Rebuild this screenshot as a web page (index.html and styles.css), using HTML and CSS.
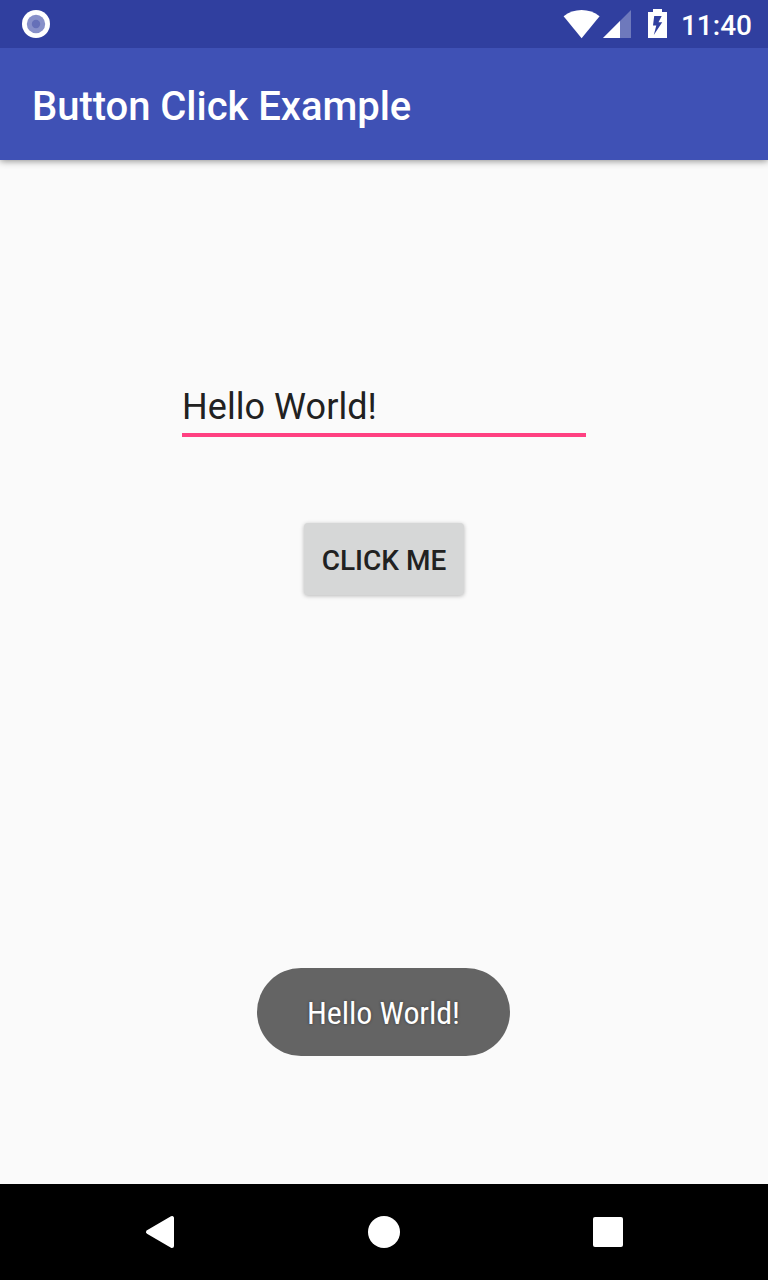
FILE: index.html
```html
<!DOCTYPE html>
<html lang="en">
<head>
<meta charset="utf-8">
<title>Button Click Example</title>
<link rel="stylesheet" href="styles.css">
</head>
<body>
<div class="screen">
  <header class="status-bar">
    <svg class="notification" width="28" height="28" viewBox="0 0 28 28"><circle cx="14" cy="14" r="14" fill="#fff"/><circle cx="14" cy="14" r="9.2" fill="#8790c9"/><circle cx="14" cy="14" r="4.2" fill="#6570b8"/></svg>
    <div class="system-icons">
      <svg class="wifi" width="36" height="29" viewBox="0 0 36 29"><path d="M-.4 6.2C9.6-2.1 25.6-2.1 35.6 6.2L17.6 28.3Z" fill="#fff"/></svg>
      <svg class="signal" width="28" height="28" viewBox="0 0 28 28"><path d="M28 0V28H0Z" fill="#fff" fill-opacity=".3"/><path d="M17 11V28H0Z" fill="#fff"/></svg>
      <svg class="battery" width="19" height="29" viewBox="0 0 19 29"><path fill="#fff" fill-rule="evenodd" d="M5 0H14V3H19V29H0V3H5ZM6.2 7L5 16.5H8.3L5.8 26L14.2 13.2H10.5L13.7 7Z"/></svg>
      <time class="clock">11:40</time>
    </div>
  </header>
  <div class="app-bar"><h1 class="title">Button Click Example</h1></div>
  <main class="content">
    <div class="field">Hello World!</div>
    <button class="action">CLICK ME</button>
    <div class="toast">Hello World!</div>
  </main>
  <nav class="nav-bar">
    <svg width="32" height="34" viewBox="0 0 32 34"><path d="M4 17L28 3V31Z" fill="#fff" stroke="#fff" stroke-width="4" stroke-linejoin="round"/></svg>
    <svg width="32" height="32" viewBox="0 0 32 32"><circle cx="16" cy="16" r="16" fill="#fff"/></svg>
    <svg width="32" height="30" viewBox="0 0 32 30"><rect x="1" width="30" height="30" rx="2" fill="#fff"/></svg>
  </nav>
</div>
</body>
</html>
```
FILE: styles.css
```css
body { margin: 0; font-family: Roboto, sans-serif; }
.screen { width: 768px; height: 1280px; display: flex; flex-direction: column; background: #fafafa; overflow: hidden; }
.status-bar { height: 48px; box-sizing: border-box; padding: 0 16px 0 22px; background: #303f9f; display: flex; align-items: center; justify-content: space-between; flex: none; }
.system-icons { display: flex; align-items: center; }
.wifi { overflow: visible; }
.signal { margin-left: 3px; }
.battery { margin-left: 17px; margin-bottom: 1px; }
.clock { margin-left: 14px; color: #fff; font-size: 28px; font-weight: 500; line-height: 46px; padding-top: 4px; }
.app-bar { height: 112px; box-sizing: border-box; padding: 6px 32px 0; flex: none; display: flex; align-items: center; background: #3f51b5; box-shadow: 0 1px 7px rgba(0,0,0,.45); clip-path: inset(0 0 -16px); z-index: 1; }
.title { margin: 0; color: #fff; font-size: 40px; font-weight: 500; line-height: 48px; letter-spacing: -.04px; }
.content { flex: 1; display: flex; flex-direction: column; align-items: center; }
.field { margin-top: 222px; width: 404px; height: 55px; box-sizing: border-box; border-bottom: 4px solid #ff4081; color: #212121; font-size: 36px; line-height: 50px; letter-spacing: .06px; }
.action { margin-top: 86px; width: 160px; height: 72px; padding: 3px 0 0; border: 0; border-radius: 4px; background: #d6d7d7; color: #212121; font: 500 28px Roboto, sans-serif; white-space: nowrap; box-shadow: 0 1px 4px rgba(0,0,0,.27); }
.toast { margin: 373px 1px 0 0; width: 253px; height: 88px; border-radius: 44px; background: #646464; color: #fff; font: 32px/90px "Roboto Condensed", Roboto, sans-serif; letter-spacing: -.08px; text-align: center; text-shadow: 0 0 3px rgba(0,0,0,.45); }
.nav-bar { height: 96px; flex: none; box-sizing: border-box; padding: 0 144px; background: #000; display: flex; justify-content: space-between; align-items: center; }
```
